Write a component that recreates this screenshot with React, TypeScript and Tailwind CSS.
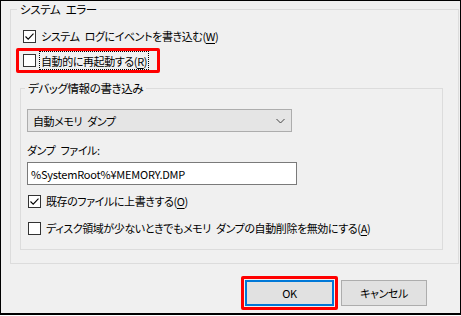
import React from 'react'

function Box({ checked }: { checked?: boolean }) {
  return (
    <span className="w-[13px] h-[13px] border border-[#333333] bg-white flex items-center justify-center shrink-0">
      {checked && (
        <svg width="11" height="11" viewBox="0 0 11 11">
          <path d="M1.5 5.5 L4.2 8.2 L9.5 2.6" fill="none" stroke="#000" strokeWidth="1.1" />
        </svg>
      )}
    </span>
  )
}

function Key({ k }: { k: string }) {
  return (
    <>
      (<span className="underline underline-offset-2">{k}</span>)
    </>
  )
}

export default function App() {
  return (
    <div className="w-[461px] h-[316px] bg-white">
      <div className="w-[461px] h-[315px] bg-[#f0f0f0] border border-black border-b-2 flex flex-col text-[11px] tracking-[-0.4px] leading-[16px] whitespace-nowrap text-black font-['Yu_Gothic_UI','Noto_Sans_CJK_JP',sans-serif] [font-feature-settings:'palt']">
        <fieldset className="ml-[9px] w-[449px] h-[263px] border border-[#dcdcdc] flex flex-col">
          <legend className="ml-[6px] px-[3px] text-[11.5px]">システム{'\u2002'}エラー</legend>

          <div className="mt-[9px] ml-[12px] flex items-center h-[20px] gap-[4px]">
            <Box checked />
            <span className="px-[1px]">
              システム{'\u2002'}ログにイベントを書き込む<Key k="W" />
            </span>
          </div>

          <div className="mt-[2px] ml-[5px] w-[144px] h-[25px] border-[3px] border-[#ff0000] rounded-[2px] pl-[4px] flex items-center gap-[3px]">
            <Box />
            <span className="px-[1px] h-[19px] flex items-center border border-dotted border-black">
              自動的に再起動する<Key k="R" />
            </span>
          </div>

          <fieldset className="mt-[7px] ml-[9px] w-[423px] h-[170px] border border-[#dcdcdc] flex flex-col">
            <legend className="ml-[4px] px-[3px] text-[11.5px]">デバッグ情報の書き込み</legend>

            <div className="mt-[13px] ml-[6px] w-[265px] h-[23px] bg-[#e5e5e5] border border-[#adadad] flex items-center justify-between pl-[5px] pr-[6px]">
              <span>自動メモリ{'\u2002'}ダンプ</span>
              <svg width="9" height="6" viewBox="0 0 9 6">
                <path d="M0.5 1 L4.5 5 L8.5 1" fill="none" stroke="#444" strokeWidth="1" />
              </svg>
            </div>

            <div className="mt-[10px] ml-[6px] h-[16px]">ダンプ{'\u2002'}ファイル:</div>

            <div className="mt-[4px] ml-[6px] w-[270px] h-[23px] bg-white border border-[#7a7a7a] flex items-center pl-[3px] tracking-[-0.2px]">
              %SystemRoot%¥MEMORY.DMP
            </div>

            <div className="mt-[6px] ml-[7px] flex items-center h-[20px] gap-[4px]">
              <Box checked />
              <span className="px-[1px]">
                既存のファイルに上書きする<Key k="O" />
              </span>
            </div>

            <div className="mt-[7px] ml-[7px] flex items-center h-[20px] gap-[4px]">
              <Box />
              <span className="px-[1px]">
                ディスク領域が少ないときでもメモリ{'\u2002'}ダンプの自動削除を無効にする<Key k="A" />
              </span>
            </div>
          </fieldset>
        </fieldset>

        <div className="mt-[12px] ml-[240px] flex items-center gap-[3px]">
          <div className="w-[97px] h-[34px] border-[3px] border-[#ff0000] rounded-[2px] p-[1px]">
            <div className="w-full h-full bg-[#e1e1e1] border-2 border-[#0078d7] flex items-center justify-center">
              OK
            </div>
          </div>
          <div className="w-[86px] h-[26px] bg-[#e1e1e1] border border-[#adadad] flex items-center justify-center">
            キャンセル
          </div>
        </div>
      </div>
    </div>
  )
}
